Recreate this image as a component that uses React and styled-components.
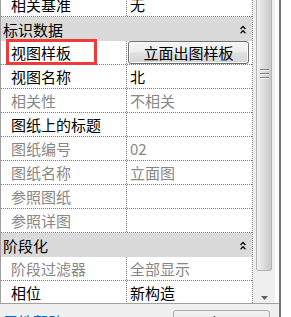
import React from "react";
import styled, { createGlobalStyle } from "styled-components";

const GlobalStyle = createGlobalStyle`
  html, body {
    margin: 0;
    padding: 0;
    background: #fff;
  }
  body {
    font-family: "Noto Sans CJK SC", "Microsoft YaHei", sans-serif;
  }
`;

const Window = styled.div`
  width: 291px;
  height: 317px;
  overflow: hidden;
  display: flex;
  background: #fff;
`;

const Panel = styled.div`
  width: 279px;
  flex-shrink: 0;
  display: flex;
  flex-direction: column;
  background: #f0f0f0;
`;

const Splitter = styled.div`
  width: 2px;
  flex-shrink: 0;
  background: #767676;
`;

const GridFrame = styled.div`
  height: 304px;
  box-sizing: border-box;
  display: flex;
  overflow: hidden;
  background: #fff;
  border-left: 1px solid #a0a0a0;
  border-bottom: 1px solid #a0a0a0;
`;

const Rows = styled.div`
  width: 252px;
  flex-shrink: 0;
  box-sizing: border-box;
  margin-top: -7px;
  border-right: 1px dotted #7a7a7a;
  align-self: flex-start;
`;

const Section = styled.div`
  height: 24px;
  display: flex;
  align-items: center;
  justify-content: space-between;
  padding: 0 6px 0 2px;
  background: #dadada;
  font-size: 15px;
  color: #000;
`;

const Row = styled.div`
  height: 24px;
  display: flex;
  box-sizing: border-box;
  border-bottom: 1px dotted #7a7a7a;
  font-size: 15px;
  color: ${(p) => (p.$muted ? "#878787" : "#000")};
`;

const Label = styled.div`
  position: relative;
  width: 126px;
  flex-shrink: 0;
  box-sizing: border-box;
  padding-left: 10px;
  display: flex;
  align-items: center;
  white-space: nowrap;
  border-right: 1px dotted #7a7a7a;
`;

const Mark = styled.div`
  position: absolute;
  left: 5px;
  top: -2px;
  width: 91px;
  height: 26px;
  box-sizing: border-box;
  border: 3px solid #f03a3a;
  pointer-events: none;
`;

const Value = styled.div`
  flex: 1;
  min-width: 0;
  padding-left: 3px;
  display: flex;
  align-items: center;
  white-space: nowrap;
`;

const TemplateButton = styled.button`
  width: 121px;
  height: 23px;
  margin-left: -2px;
  padding: 0;
  box-sizing: border-box;
  border: 1px solid #707070;
  border-radius: 3px;
  background: linear-gradient(#f6f6f6 0%, #ececec 48%, #dfdfdf 52%, #d6d6d6 100%);
  box-shadow: inset 0 0 0 1px #fbfbfb;
  font-family: inherit;
  font-size: 15px;
  color: #000;
  line-height: 20px;
`;

const ScrollBar = styled.div`
  width: 22px;
  flex-shrink: 0;
  display: flex;
  flex-direction: column;
  background: #efefef;
`;

const Thumb = styled.div`
  height: 271px;
  margin: 0 3px;
  box-sizing: border-box;
  padding-top: 69px;
  display: flex;
  flex-direction: column;
  align-items: center;
  gap: 2px;
  border: 1px solid #b4b4b4;
  border-top: none;
  border-radius: 0 0 3px 3px;
  background: linear-gradient(to right, #f2f2f2 0%, #e3e3e3 35%, #d6d6d6 65%, #c9c9c9 100%);
`;

const Grip = styled.div`
  width: 9px;
  height: 1px;
  background: #7e7e7e;
  border-bottom: 1px solid #f6f6f6;
`;

const Track = styled.div`
  flex: 1;
`;

const ArrowBox = styled.div`
  height: 20px;
  box-sizing: border-box;
  padding-top: 13px;
  display: flex;
  justify-content: center;
`;

const Gap = styled.div`
  flex: 1;
  background: #fff;
`;

const Footer = styled.div`
  flex: 1;
  display: flex;
  justify-content: space-between;
  align-items: flex-start;
  padding: 6px 9px 0 3px;
  overflow: hidden;
`;

const HelpLink = styled.span`
  margin-top: 2px;
  font-size: 15px;
  line-height: 20px;
  color: #0066cc;
`;

const ApplyButton = styled.button`
  width: 97px;
  height: 24px;
  padding: 0;
  border: 1px solid #acacac;
  border-radius: 3px;
  background: linear-gradient(#f2f2f2, #e2e2e2);
  font-family: inherit;
  font-size: 15px;
  color: #000;
`;

const Chevrons = () => (
  <svg width="6" height="9" viewBox="0 0 6 9">
    <polyline points="0.6,4 3,1.4 5.4,4" fill="none" stroke="#000" strokeWidth="1.3" />
    <polyline points="0.6,8.2 3,5.6 5.4,8.2" fill="none" stroke="#000" strokeWidth="1.3" />
  </svg>
);

const items = [
  { label: "相关基准", value: "无" },
  { section: "标识数据" },
  { label: "视图样板", button: "立面出图样板", marked: true },
  { label: "视图名称", value: "北" },
  { label: "相关性", value: "不相关", muted: true },
  { label: "图纸上的标题", value: "" },
  { label: "图纸编号", value: "02", muted: true },
  { label: "图纸名称", value: "立面图", muted: true },
  { label: "参照图纸", value: "", muted: true },
  { label: "参照详图", value: "", muted: true },
  { section: "阶段化" },
  { label: "阶段过滤器", value: "全部显示", muted: true },
  { label: "相位", value: "新构造" },
];

export default function App() {
  return (
    <>
      <GlobalStyle />
      <Window>
        <Panel>
          <GridFrame>
            <Rows>
              {items.map((it, i) =>
                it.section ? (
                  <Section key={i}>
                    <span>{it.section}</span>
                    <Chevrons />
                  </Section>
                ) : (
                  <Row key={i} $muted={it.muted}>
                    <Label>
                      {it.label}
                      {it.marked && <Mark />}
                    </Label>
                    <Value>
                      {it.button ? (
                        <TemplateButton>{it.button}</TemplateButton>
                      ) : (
                        it.value
                      )}
                    </Value>
                  </Row>
                )
              )}
            </Rows>
            <ScrollBar>
              <Thumb>
                <Grip />
                <Grip />
                <Grip />
              </Thumb>
              <Track />
              <ArrowBox>
                <svg width="7" height="4" viewBox="0 0 7 4">
                  <polygon points="0,0 7,0 3.5,4" fill="#606060" />
                </svg>
              </ArrowBox>
            </ScrollBar>
            <Gap />
          </GridFrame>
          <Footer>
            <HelpLink>属性帮助</HelpLink>
            <ApplyButton>应用</ApplyButton>
          </Footer>
        </Panel>
        <Splitter />
      </Window>
    </>
  );
}
